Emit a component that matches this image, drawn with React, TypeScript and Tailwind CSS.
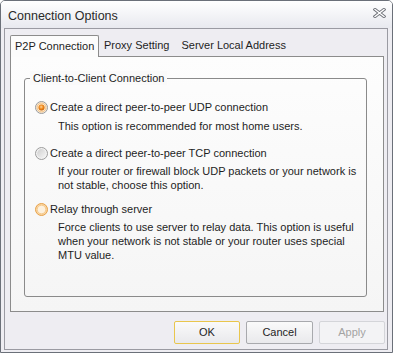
import React from "react";

const font = { fontFamily: '"Liberation Sans", Arial, sans-serif' };

function Radio({ kind }: { kind: "checked" | "hover" | "normal" }) {
  if (kind === "checked") {
    return (
      <svg width="13" height="13" viewBox="0 0 13 13" className="shrink-0">
        <defs>
          <radialGradient id="rc" cx="45%" cy="40%" r="60%">
            <stop offset="0%" stopColor="#fdd39a" />
            <stop offset="55%" stopColor="#f08a1c" />
            <stop offset="100%" stopColor="#c9620b" />
          </radialGradient>
        </defs>
        <circle cx="6.5" cy="6.5" r="6" fill="#f4f4f4" stroke="#9a9a9a" strokeWidth="1" />
        <circle cx="6.5" cy="6.5" r="4.6" fill="#fbe3c2" stroke="#f0b56a" strokeWidth="0.8" />
        <circle cx="6.5" cy="6.5" r="3" fill="url(#rc)" />
      </svg>
    );
  }
  if (kind === "hover") {
    return (
      <svg width="13" height="13" viewBox="0 0 13 13" className="shrink-0">
        <defs>
          <radialGradient id="rh" cx="50%" cy="50%" r="55%">
            <stop offset="0%" stopColor="#fff4e2" />
            <stop offset="100%" stopColor="#f7cd90" />
          </radialGradient>
        </defs>
        <circle cx="6.5" cy="6.5" r="6" fill="url(#rh)" stroke="#e7a24c" strokeWidth="1" />
        <circle cx="6.5" cy="6.5" r="4.3" fill="#fdf1de" stroke="#f4c27d" strokeWidth="0.8" />
      </svg>
    );
  }
  return (
    <svg width="13" height="13" viewBox="0 0 13 13" className="shrink-0">
      <defs>
        <linearGradient id="rn" x1="0" y1="0" x2="1" y2="1">
          <stop offset="0%" stopColor="#cfcfcf" />
          <stop offset="100%" stopColor="#f6f6f6" />
        </linearGradient>
      </defs>
      <circle cx="6.5" cy="6.5" r="6" fill="#f2f2f2" stroke="#9c9c9c" strokeWidth="1" />
      <circle cx="6.5" cy="6.5" r="4.4" fill="url(#rn)" />
    </svg>
  );
}

function CloseIcon() {
  return (
    <svg width="13" height="10" viewBox="0 0 13 10">
      <path d="M2 1.5 L11 8.5 M11 1.5 L2 8.5" stroke="#6e7178" strokeWidth="3.2" strokeLinecap="square" fill="none" />
      <path d="M2 1.5 L11 8.5 M11 1.5 L2 8.5" stroke="#ffffff" strokeWidth="1.4" strokeLinecap="square" fill="none" />
    </svg>
  );
}

export default function App() {
  return (
    <div className="w-[394px] h-[354px] bg-white" style={font}>
      <div className="w-[393px] h-[353px] flex flex-col border border-[#6b7079] rounded-t-[5px] bg-[#eeedf2] overflow-hidden">
        {/* Title bar */}
        <div className="h-[27px] shrink-0 flex items-center justify-between pl-[7px] pr-[6px] pt-[3px] bg-gradient-to-b from-[#ffffff] to-[#e8e9ef]">
          <span className="text-[12.5px] text-[#2a2a2a] leading-none">Connection Options</span>
          <div className="mb-[6px]">
            <CloseIcon />
          </div>
        </div>
        {/* Frame */}
        <div className="flex-1 ml-[3px] mr-[4px] mb-[2px] border border-[#9a9aa2] bg-[#eeedf2] flex flex-col pt-[6px] pl-[5px] pr-[2px]">
          {/* Tabs */}
          <div className="flex items-end h-[21px] text-[11px] text-[#1e1e1e] mr-[1px]">
            <div className="h-[22px] w-[89px] relative z-10 -mb-[1px] border border-b-0 border-[#8c8c8c] rounded-t-[2px] bg-[#fcfcfc] pl-[4px] pt-[4px] leading-[13px]">
              P2P Connection
            </div>
            <div className="pl-[5px] pr-[7px] pb-[4px] leading-[13px]">Proxy Setting</div>
            <div className="pl-[5px] pb-[4px] leading-[13px]">Server Local Address</div>
          </div>
          {/* Pane */}
          <div className="h-[256px] mr-[1px] border border-[#8c8c8c] bg-gradient-to-b from-[#fdfdfd] to-[#f5f5f5] pt-[21px] pl-[13px] pr-[16px]">
            <div className="relative h-[219px] border border-[#8a8a8a] rounded-[3px] text-[11px] text-[#1e1e1e]">
              <div className="absolute -top-[8px] left-[5px] px-[3px] bg-[#fafafa] leading-[14px]">
                Client-to-Client Connection
              </div>
              <div className="pl-[10px] pt-[21px] leading-[14px]">
                <div className="flex items-center gap-[2px] h-[14px]">
                  <Radio kind="checked" />
                  <span>Create a direct peer-to-peer UDP connection</span>
                </div>
                <div className="pl-[23px] mt-[5px]">This option is recommended for most home users.</div>
                <div className="flex items-center gap-[2px] h-[14px] mt-[13px]">
                  <Radio kind="normal" />
                  <span>Create a direct peer-to-peer TCP connection</span>
                </div>
                <div className="pl-[23px] mt-[4px]">
                  If your router or firewall block UDP packets or your network is
                  <br />
                  not stable, choose this option.
                </div>
                <div className="flex items-center gap-[2px] h-[14px] mt-[10px]">
                  <Radio kind="hover" />
                  <span>Relay through server</span>
                </div>
                <div className="pl-[23px] mt-[4px]">
                  Force clients to use server to relay data. This option is useful
                  <br />
                  when your network is not stable or your router uses special
                  <br />
                  MTU value.
                </div>
              </div>
            </div>
          </div>
          {/* Buttons */}
          <div className="flex justify-end gap-[6px] mt-[9px] text-[11px]">
            <button className="w-[66px] h-[23px] border border-[#e9c64d] rounded-[2px] bg-gradient-to-b from-[#fafafa] to-[#e9e9ec] text-[#1e1e1e]">
              OK
            </button>
            <button className="w-[67px] h-[23px] border border-[#a8a9ad] rounded-[2px] bg-gradient-to-b from-[#fafafa] to-[#e9e9ec] text-[#1e1e1e]">
              Cancel
            </button>
            <button className="w-[66px] h-[23px] border border-[#d4d5d9] rounded-[2px] bg-[#f3f3f5] text-[#a3a3a3]">
              Apply
            </button>
          </div>
        </div>
      </div>
    </div>
  );
}
